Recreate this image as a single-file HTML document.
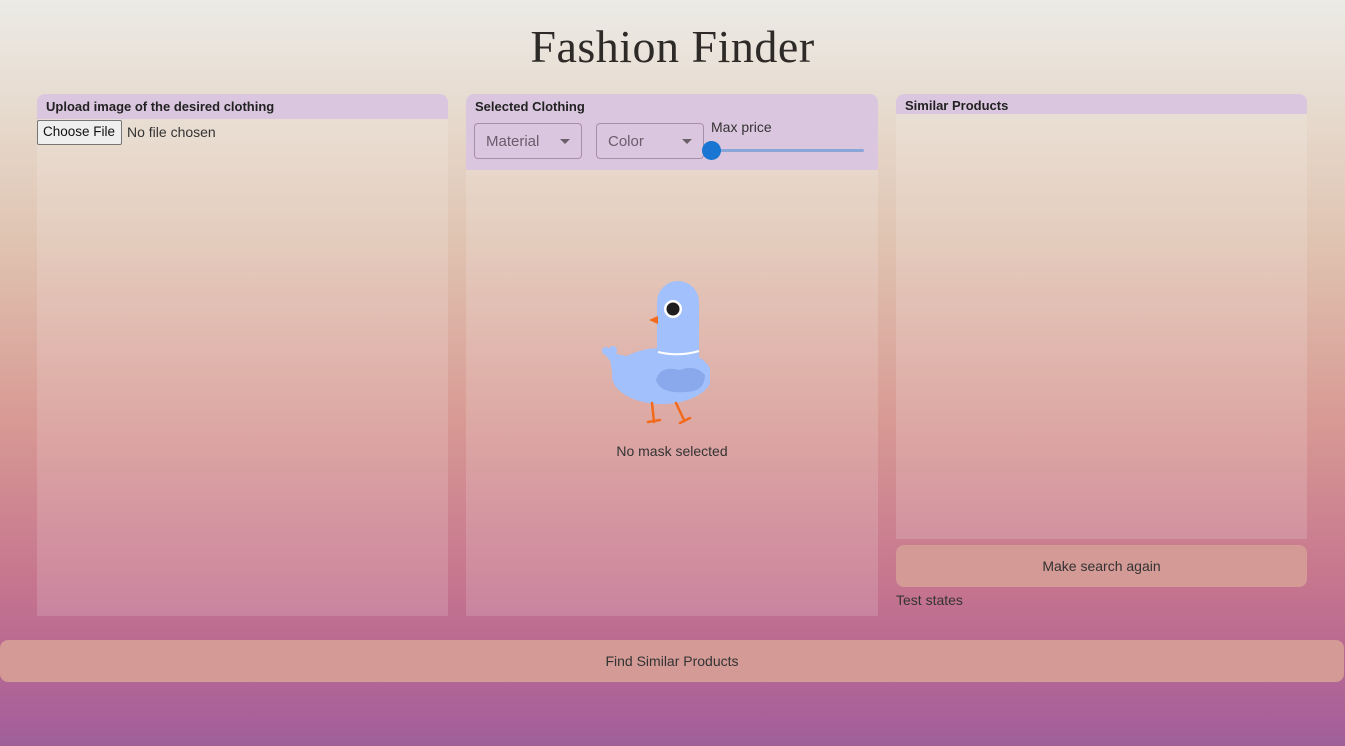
<!DOCTYPE html>
<html><head><meta charset="utf-8"><style>
*{box-sizing:border-box;margin:0;padding:0}
body{width:1345px;height:746px;overflow:hidden;position:relative;font-family:"Liberation Sans",sans-serif;color:#333;
background:linear-gradient(180deg,#ecebe6 0px,#e6d9cc 120px,#e0c4b2 240px,#d89a94 420px,#c6768e 580px,#bb6b90 640px,#a8619a 720px,#9e5f98 746px);}
h1{position:absolute;top:20px;left:0;width:1345px;text-align:center;font-family:"Liberation Serif",serif;font-weight:400;font-size:46px;color:#2e2a28;letter-spacing:0.5px}
.panel{position:absolute;background:rgba(255,255,255,0.15);}
.hdr{position:absolute;left:0;right:0;top:0;background:#dbc6df;border-radius:8px 8px 0 0;font-weight:bold;font-size:13px;color:#222;padding:5px 9px}
.btn{position:absolute;background:#d39a96;border-radius:8px;text-align:center;font-size:14px;color:#333}
.sel{position:absolute;top:29px;height:36px;border:1px solid #a88fa8;border-radius:4px;font-size:15px;color:#6a5c6c;padding:9px 11px}
.sel:after{content:"";position:absolute;right:11px;top:15px;border-left:5px solid transparent;border-right:5px solid transparent;border-top:5px solid #6a606a}
</style></head><body>
<h1>Fashion Finder</h1>

<div class="panel" style="left:37px;top:94px;width:411px;height:522px;border-radius:8px 8px 0 0">
 <div class="hdr" style="height:25px">Upload image of the desired clothing</div>
 <div style="position:absolute;top:26px;left:0;height:25px;width:85px;border:1px solid #767676;background:#efefef;border-radius:2px;font-size:13.5px;color:#111;padding:3px 5px;white-space:nowrap;overflow:hidden">Choose File</div>
 <div style="position:absolute;top:30px;left:90px;font-size:14px;color:#333">No file chosen</div>
</div>

<div class="panel" style="left:466px;top:94px;width:412px;height:522px;border-radius:8px 8px 0 0">
 <div class="hdr" style="height:76px">Selected Clothing
  <div class="sel" style="left:8px;width:108px;font-weight:normal">Material</div>
  <div class="sel" style="left:130px;width:108px;font-weight:normal">Color</div>
  <div style="position:absolute;left:245px;top:25px;font-weight:normal;font-size:14px;color:#333">Max price</div>
  <div style="position:absolute;left:245px;top:55px;width:153px;height:3px;background:#8aa6d8;border-radius:2px"></div>
  <div style="position:absolute;left:236px;top:47px;width:19px;height:19px;border-radius:50%;background:#1976d2"></div>
 </div>
 <svg style="position:absolute;left:124px;top:176px" width="120" height="160" viewBox="590 270 120 160">
  <path d="M657 302 a21 21 0 0 1 42 0 V390 H657Z" fill="#a2c0fb"/>
  <ellipse cx="662" cy="376" rx="50" ry="28" fill="#a2c0fb"/>
  <path d="M609 352 Q640 360 660 360 L660 390 Q625 395 612 372 Z" fill="#a2c0fb"/>
  <circle cx="606" cy="351" r="4" fill="#a2c0fb"/><circle cx="613" cy="350" r="4" fill="#a2c0fb"/>
  <path d="M604 353 L611 362 L617 352Z" fill="#a2c0fb"/>
  <path d="M656 380 Q660 365 680 370 Q695 364 705 375 Q705 392 685 392 Q660 394 656 380Z" fill="#8aa8ec"/>
  <path d="M658 352 Q679 357 699 351" stroke="#fff" stroke-width="2" fill="none"/>
  <circle cx="673" cy="309" r="9" fill="#fff"/><circle cx="673" cy="309" r="6.5" fill="#1e1e1e"/>
  <path d="M649 320 L658 316 L658 324Z" fill="#f26a1b"/>
  <path d="M652 403 L654 422 M648 422 L660 420 M676 403 L684 420 M680 423 L690 418" stroke="#f26a1b" stroke-width="2.5" fill="none" stroke-linecap="round"/>
 </svg>
 <div style="position:absolute;top:349px;left:0;width:412px;text-align:center;font-size:14px;color:#333">No mask selected</div>
</div>

<div class="panel" style="left:896px;top:94px;width:411px;height:445px;border-radius:8px 8px 0 0">
 <div class="hdr" style="height:20px;padding-top:4px">Similar Products</div>
</div>
<div class="btn" style="left:896px;top:545px;width:411px;height:42px;line-height:43px">Make search again</div>
<div style="position:absolute;left:896px;top:592px;font-size:14px;color:#333">Test states</div>

<div class="btn" style="left:0;top:640px;width:1344px;height:42px;line-height:43px">Find Similar Products</div>
</body></html>
